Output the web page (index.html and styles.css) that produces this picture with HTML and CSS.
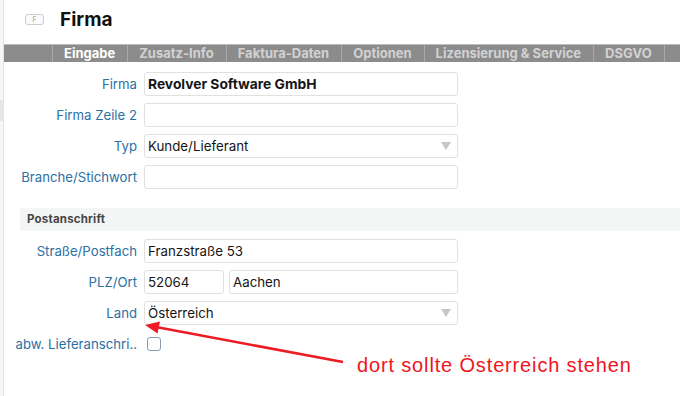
FILE: index.html
```html
<html>
  <head>
    <title>Firma</title>
    <meta name="viewport" content="width=device-width, initial-scale=1.0">
    <link rel="stylesheet" href="styles.css">
  </head>
  <body>
    <aside class="strip">
      <div class="strip__item"></div>
    </aside>

    <main class="main">
      <header class="head">
        <span class="key">F</span>
        <h1 class="head__title">Firma</h1>
      </header>

      <nav class="tabs">
        <span class="tab tab--active">Eingabe</span>
        <span class="tab">Zusatz-Info</span>
        <span class="tab">Faktura-Daten</span>
        <span class="tab">Optionen</span>
        <span class="tab">Lizensierung &amp; Service</span>
        <span class="tab">DSGVO</span>
        <span class="tab tab--end"></span>
      </nav>

      <div class="form">
        <label class="form__label">Firma</label>
        <div class="field field--bold">Revolver Software GmbH</div>

        <label class="form__label">Firma Zeile 2</label>
        <div class="field"></div>

        <label class="form__label">Typ</label>
        <div class="field field--select">Kunde/Lieferant<span class="caret"></span></div>

        <label class="form__label">Branche/Stichwort</label>
        <div class="field"></div>
      </div>

      <div class="section">Postanschrift</div>

      <div class="form form--post">
        <label class="form__label">Straße/Postfach</label>
        <div class="field">Franzstraße 53</div>

        <label class="form__label">PLZ/Ort</label>
        <div class="pair">
          <div class="field field--zip">52064</div>
          <div class="field field--grow">Aachen</div>
        </div>

        <label class="form__label">Land</label>
        <div class="field field--select">Österreich<span class="caret"></span></div>

        <label class="form__label">abw. Lieferanschri..</label>
        <div class="check-cell"><span class="check"></span></div>
      </div>
    </main>

    <!-- annotation drawn on top of the screenshot -->
    <svg class="arrow" width="680" height="396" viewBox="0 0 680 396">
      <line x1="343" y1="362" x2="156" y2="327" stroke="#ee1b22" stroke-width="2.6" />
      <polygon points="145,325 157.5,333.5 160,321.5" fill="#ee1b22" />
    </svg>
    <div class="note">dort sollte Österreich stehen</div>
  </body>
</html>
```

FILE: styles.css
```css
body {
  margin: 0;
  display: flex;
  height: 396px;
  overflow: hidden;
  background: #ffffff;
  font-family: Inter, "Noto Sans", sans-serif;
  color: #1a1a1a;
  position: relative;
}

.strip {
  width: 3px;
  flex: none;
  background: #f6f6f6;
  border-right: 1px solid #e4e4e4;
}
.strip__item {
  margin-top: 100px;
  height: 21px;
  background: #e6e6e6;
}

.main {
  flex: 1;
  min-width: 0;
}

.head {
  height: 44px;
  display: flex;
  align-items: center;
  padding-left: 21px;
  box-sizing: border-box;
  padding-bottom: 6px;
}
.key {
  width: 17px;
  height: 9px;
  border: 1px solid #cdcdcd;
  border-radius: 3px;
  background: #fbfbfb;
  color: #9a9a9a;
  font-size: 7px;
  line-height: 9px;
  text-align: center;
}
.head__title {
  margin: 0 0 0 16px;
  font-size: 19px;
  font-weight: 700;
  color: #111;
}

.tabs {
  height: 18px;
  box-sizing: border-box;
  border-top: 1px solid #bcbcbc;
  background: #8c8c8c;
  display: flex;
  padding-left: 48px;
}
.tab {
  border-left: 1px solid #a9a9a9;
  padding: 0 12px 0 11px;
  font-size: 13px;
  font-weight: 700;
  line-height: 16px;
  color: #d2d2d2;
  white-space: nowrap;
}
.tab--active {
  color: #ffffff;
}
.tab--end {
  padding: 0;
}

.form {
  display: grid;
  grid-template-columns: 133px 314px;
  column-gap: 7px;
  row-gap: 7px;
  padding-top: 10px;
}
.form--post {
  padding-top: 8px;
}
.form__label {
  font-size: 13.2px;
  color: #2b6fa3;
  text-align: right;
  line-height: 24px;
  white-space: nowrap;
}

.field {
  height: 24px;
  box-sizing: border-box;
  border: 1px solid #e1e1e1;
  border-radius: 3px;
  padding-left: 3px;
  font-size: 13.3px;
  line-height: 22px;
  color: #151515;
  background: #ffffff;
}
.field--bold {
  font-weight: 700;
  font-size: 13.8px;
}
.field--select {
  display: flex;
  justify-content: space-between;
  align-items: center;
  padding-right: 6px;
}
.caret {
  width: 0;
  height: 0;
  border-left: 5px solid transparent;
  border-right: 5px solid transparent;
  border-top: 8px solid #c6c6c6;
}

.pair {
  display: flex;
  gap: 5px;
}
.field--zip {
  width: 80px;
}
.field--grow {
  flex: 1;
}

.check-cell {
  display: flex;
  align-items: center;
  padding-left: 3px;
}
.check {
  width: 12px;
  height: 12px;
  border: 1px solid #8a9bb0;
  border-radius: 3px;
  background: #ffffff;
}

.section {
  margin: 19px 0 0 16px;
  height: 23px;
  background: #f4f6f6;
  padding-left: 7px;
  font-size: 11.5px;
  font-weight: 700;
  letter-spacing: 0.2px;
  line-height: 23px;
  color: #454545;
}

.arrow {
  position: absolute;
  left: 0;
  top: 0;
}
.note {
  position: absolute;
  left: 357px;
  top: 354px;
  font-family: "Liberation Sans", Arial, sans-serif;
  font-size: 20px;
  letter-spacing: 0.85px;
  color: #f0141c;
  white-space: nowrap;
}
```
